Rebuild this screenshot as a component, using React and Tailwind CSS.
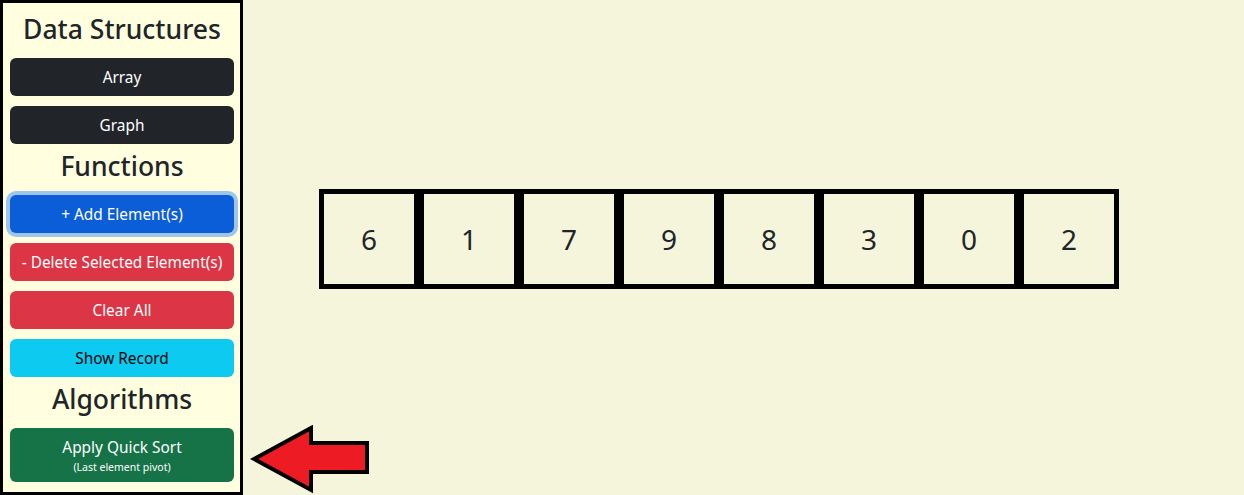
import React from 'react';

const values = [6, 1, 7, 9, 8, 3, 0, 2];

function SideButton({ className, children }) {
  return (
    <button
      className={`w-full h-[38px] pt-[2px] rounded-md text-[15.4px] flex flex-col items-center justify-center ${className}`}
    >
      {children}
    </button>
  );
}

function Heading({ children, top }) {
  return (
    <h3 className={`h-[51px] pb-[6px] flex items-center justify-center text-[26.5px] font-medium text-[#212529] ${top ? 'mt-[4px]' : ''}`}>
      {children}
    </h3>
  );
}

export default function App() {
  return (
    <div
      className="relative flex h-screen w-full bg-[#f5f5dc] overflow-hidden"
      style={{ fontFamily: '"Noto Sans", "Open Sans", sans-serif' }}
    >
      <aside className="w-[243px] h-full shrink-0 border-[3px] border-black bg-[#ffffe0] pl-[7px] pr-[6px] flex flex-col">
        <Heading top>Data Structures</Heading>
        <div className="flex flex-col gap-[10px]">
          <SideButton className="bg-[#212529] text-white">Array</SideButton>
          <SideButton className="bg-[#212529] text-white">Graph</SideButton>
        </div>
        <Heading>Functions</Heading>
        <div className="flex flex-col gap-[10px]">
          <SideButton className="bg-[#0b5ed7] text-white ring-4 ring-[#0d6efd]/40">+ Add Element(s)</SideButton>
          <SideButton className="bg-[#dc3545] text-white">- Delete Selected Element(s)</SideButton>
          <SideButton className="bg-[#dc3545] text-white">Clear All</SideButton>
          <SideButton className="bg-[#0dcaf0] text-black">Show Record</SideButton>
        </div>
        <Heading>Algorithms</Heading>
        <button className="w-full h-[54px] pt-[2px] rounded-md bg-[#157347] text-white flex flex-col items-center justify-center">
          <span className="text-[15.4px] leading-[22px]">Apply Quick Sort</span>
          <span className="text-[10.5px] leading-[16px]">(Last element pivot)</span>
        </button>
      </aside>

      <main className="flex-1 pt-[189px] pl-[76px]">
        <div className="flex">
          {values.map((v, i) => (
            <div
              key={i}
              className="w-[100px] h-[100px] border-[5px] border-black flex items-center justify-center text-[28px] text-[#212529]"
            >
              {v}
            </div>
          ))}
        </div>
      </main>

      <svg
        className="absolute left-[250px] top-[425px]"
        width="122"
        height="70"
        viewBox="0 0 122 70"
      >
        <polygon
          points="4,34 61,3 61,18 117,18 117,47 61,47 61,65"
          fill="#ed1c24"
          stroke="#000"
          strokeWidth="4"
          strokeLinejoin="miter"
        />
      </svg>
    </div>
  );
}
